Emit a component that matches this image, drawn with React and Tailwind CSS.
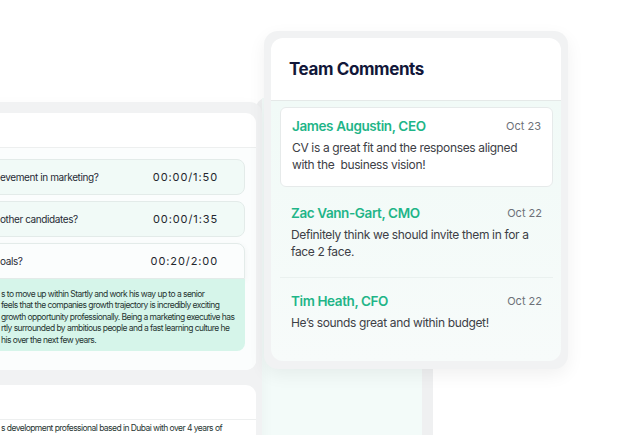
import React from "react";

const rows = [
  { q: "evement in marketing?", t: "00:00/1:50" },
  { q: "other candidates?", t: "00:00/1:35" },
];

const para = [
  "s to move up within Startly and work his way up to a senior",
  "feels that the companies growth trajectory is incredibly exciting",
  "growth opportunity professionally. Being a marketing executive has",
  "rtly surrounded by ambitious people and a fast learning culture he",
  "his over the next few years.",
];

const comments = [
  {
    name: "James Augustin, CEO",
    date: "Oct 23",
    body: ["CV is a great fit and the responses aligned", "with the  business vision!"],
  },
  {
    name: "Zac Vann-Gart, CMO",
    date: "Oct 22",
    body: ["Definitely think we should invite them in for a", "face 2 face."],
  },
  {
    name: "Tim Heath, CFO",
    date: "Oct 22",
    body: ["He\u2019s sounds great and within budget!"],
  },
];

function QuestionRow({ q, t, open }) {
  return (
    <div
      className={
        "h-[36px] flex items-center justify-between pl-[29px] pr-[26px] border border-[#e3ebe9] " +
        (open
          ? "rounded-t-[8px] bg-[#fbfdfd] shadow-[0_2px_6px_rgba(0,0,0,0.05)]"
          : "rounded-[8px] bg-[#f1faf7]")
      }
    >
      <span className="text-[10px] text-[#272b36] tracking-[-0.4px] whitespace-nowrap">{q}</span>
      <span className="text-[11px] text-[#23262d] tracking-[0.9px] whitespace-nowrap">{t}</span>
    </div>
  );
}

function Comment({ c, card, last }) {
  return (
    <div
      className={
        "px-[11px] " +
        (card
          ? "bg-white border border-[#e6eaea] rounded-[6px] pt-[8px] pb-[13px]"
          : last
          ? "pt-[13px] pb-[12px]"
          : "pt-[9px] pb-[17px] border-b border-[#eaf1ef]")
      }
    >
      <div className="flex items-center justify-between h-[20px]">
        <span className="text-[13.5px] font-semibold text-[#1fb588] tracking-[-0.4px]">{c.name}</span>
        <span className="text-[11px] text-[#6d7178]">{c.date}</span>
      </div>
      <div className="mt-[3px] text-[12px] leading-[17px] text-[#3d4046] tracking-[-0.35px]">
        {c.body.map((l, i) => (
          <div key={i} className="whitespace-pre">{l}</div>
        ))}
      </div>
    </div>
  );
}

export default function App() {
  return (
    <div
      className="relative w-[640px] h-[435px] overflow-hidden bg-white"
      style={{ fontFamily: "Inter, 'Noto Sans', sans-serif" }}
    >
      {/* panel behind comments */}
      <div className="absolute left-[256px] top-[98px] w-[177px] h-[400px] bg-[#eff0f1] rounded-[10px] pl-[6px] pr-[11px]">
        <div className="h-full bg-[#f3fbf9]" />
      </div>

      {/* left interview panel */}
      <div className="absolute left-[-30px] top-[102px] w-[292px] h-[360px] bg-[#f1f2f3] rounded-tr-[12px] pt-[11px] pr-[6px] flex flex-col gap-[15px] shadow-[0_4px_14px_rgba(0,0,0,0.04)]">
        <div className="h-[257px] bg-white rounded-[10px] flex flex-col overflow-hidden">
          <div className="h-[35px] border-b border-[#edefef] shrink-0" />
          <div className="flex-1 bg-[#fbfdfd] pt-[11px] pr-[11px] flex flex-col gap-[6px]">
            {rows.map((r) => (
              <QuestionRow key={r.t} q={r.q} t={r.t} />
            ))}
            <div>
              <QuestionRow q="oals?" t="00:20/2:00" open />
              <div className="h-[72px] bg-[#d6f5ea] rounded-b-[8px] pl-[31px] pt-[10px] text-[8.5px] leading-[11.4px] text-[#273532] tracking-[-0.55px]">
                {para.map((l, i) => (
                  <div key={i} className="whitespace-nowrap">{l}</div>
                ))}
              </div>
            </div>
          </div>
        </div>
        <div className="flex-1 bg-white rounded-[10px] flex flex-col">
          <div className="h-[35px] border-b border-[#edefef] shrink-0" />
          <div className="pl-[31px] pt-[3px] text-[8.5px] leading-[11px] text-[#273532] tracking-[-0.55px] whitespace-nowrap">
            s development professional based in Dubai with over 4 years of
          </div>
        </div>
      </div>

      {/* team comments card */}
      <div className="absolute left-[264px] top-[31px] w-[304px] h-[338px] bg-[#f1f2f3] rounded-[14px] p-[7px] pb-[8px] shadow-[0_6px_18px_rgba(0,0,0,0.06)]">
        <div className="h-full rounded-[12px] overflow-hidden flex flex-col">
          <div className="h-[63px] bg-white border-b border-[#e5e9e8] flex items-center pl-[18px] pt-[2px] shrink-0">
            <span className="text-[17px] font-bold text-[#121739] tracking-[-0.4px]">Team Comments</span>
          </div>
          <div className="flex-1 bg-gradient-to-b from-[#f1faf7] to-[#f7fbfa] pt-[6px] pl-[9px] pr-[8px] flex flex-col">
            <Comment c={comments[0]} card />
            <div className="h-[7px]" />
            <Comment c={comments[1]} />
            <Comment c={comments[2]} last />
          </div>
        </div>
      </div>
    </div>
  );
}
